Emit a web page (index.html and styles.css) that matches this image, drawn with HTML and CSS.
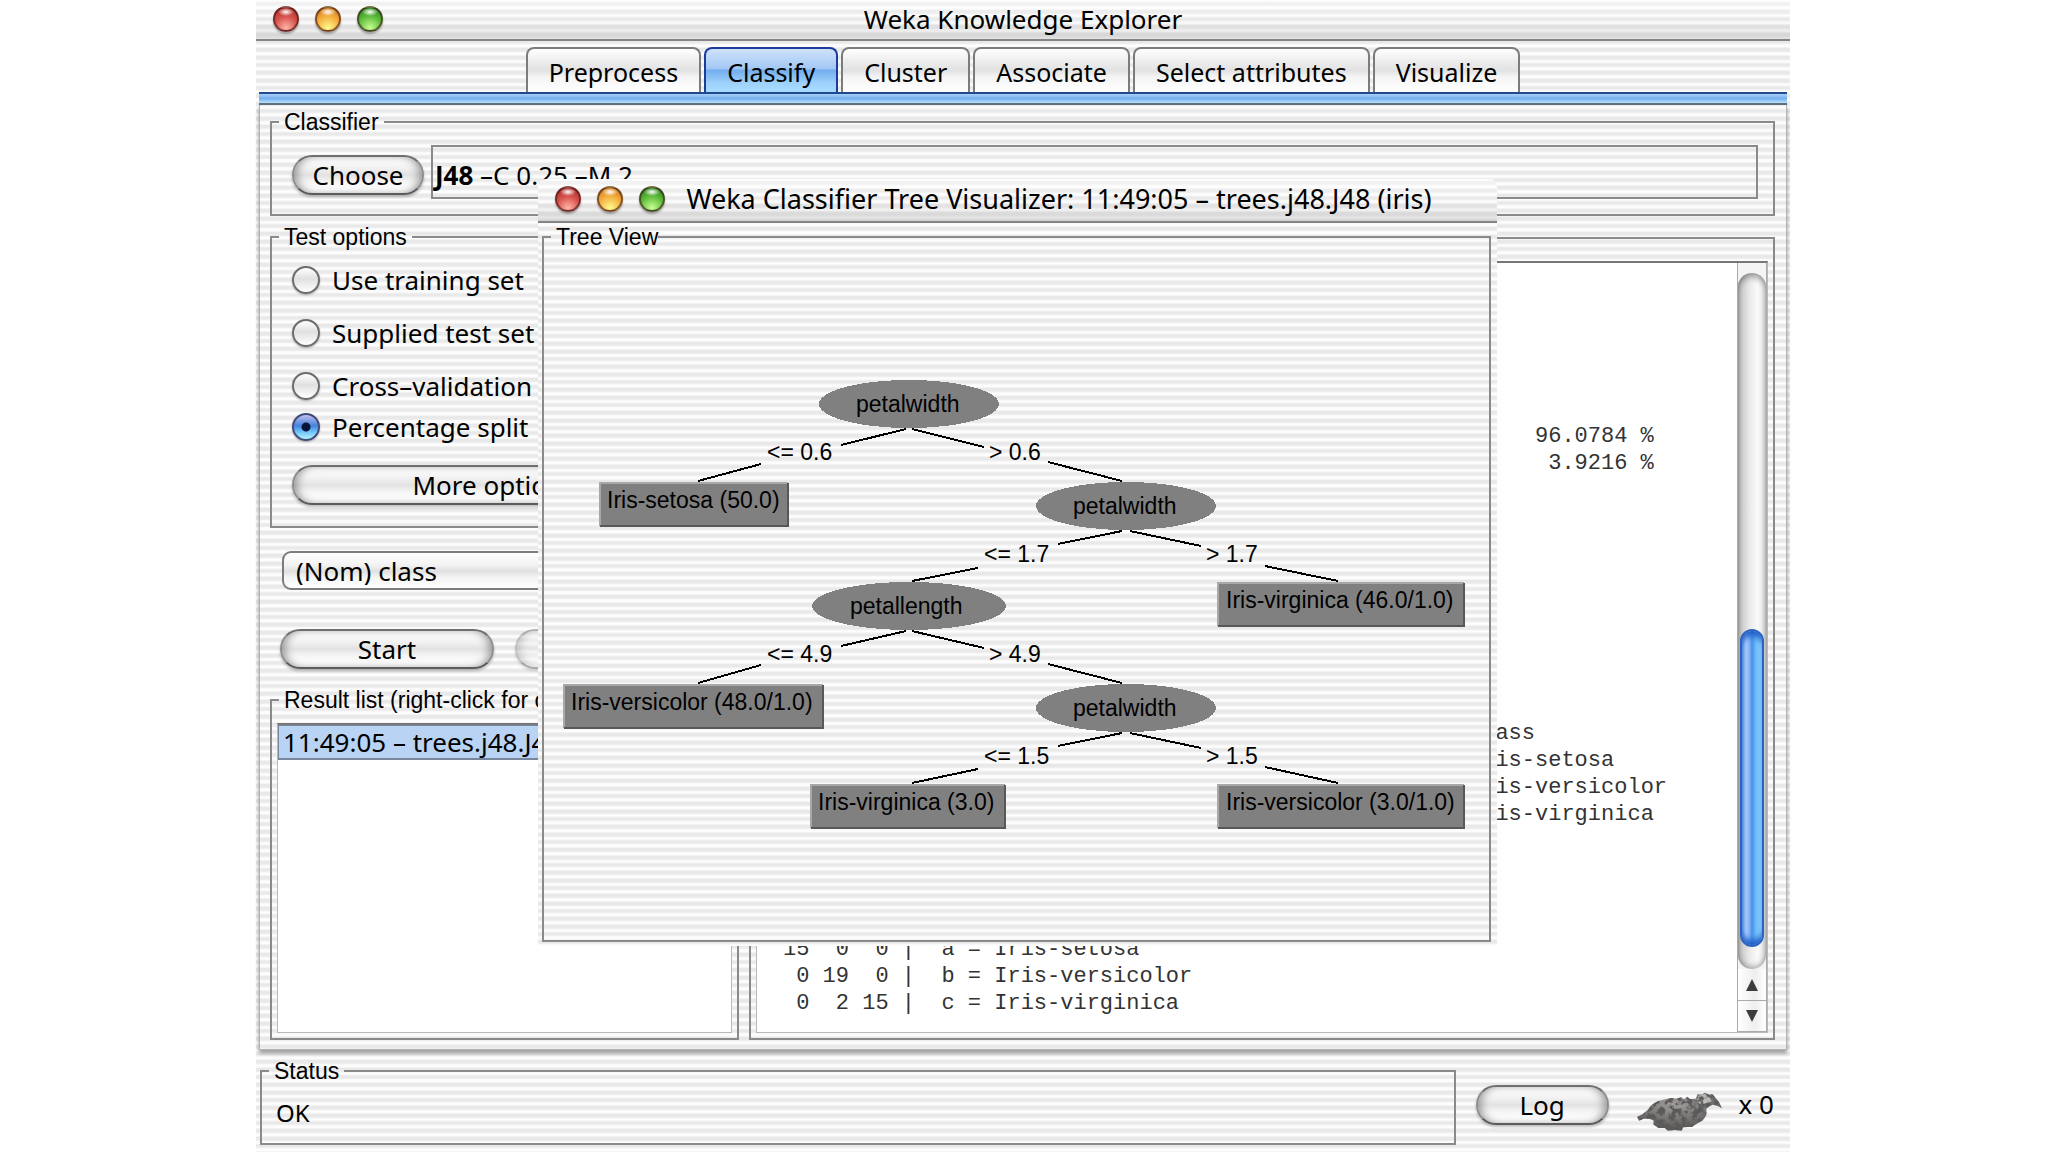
FILE: index.html
```html
<!DOCTYPE html>
<html lang="en">
<head>
<meta charset="utf-8">
<title>Weka Knowledge Explorer</title>
<link rel="stylesheet" href="styles.css">
</head>
<body>
<main class="window">
  <header class="titlebar">
    <div class="lights">
      <button class="light red" aria-label="Close"></button>
      <button class="light amber" aria-label="Minimize"></button>
      <button class="light green" aria-label="Zoom"></button>
    </div>
    <h1 class="title">Weka Knowledge Explorer</h1>
  </header>

  <nav class="tabs">
    <button class="tab">Preprocess</button>
    <button class="tab active">Classify</button>
    <button class="tab">Cluster</button>
    <button class="tab">Associate</button>
    <button class="tab">Select attributes</button>
    <button class="tab">Visualize</button>
  </nav>
  <div class="strip"></div>

  <div class="panel">
    <fieldset class="group">
      <legend>Classifier</legend>
      <div class="classifier-row">
        <button class="aqua choose">Choose</button>
        <div class="scheme"><b>J48</b> –C 0.25 –M 2</div>
      </div>
    </fieldset>

    <div class="columns">
      <div class="side">
        <fieldset class="group">
          <legend>Test options</legend>
          <div class="options">
            <label class="option"><input class="radio" type="radio" name="test">Use training set</label>
            <label class="option"><input class="radio" type="radio" name="test">Supplied test set</label>
            <label class="option"><input class="radio" type="radio" name="test">Cross–validation</label>
            <label class="option last"><input class="radio" type="radio" name="test" checked>Percentage split</label>
            <button class="aqua more">More options...</button>
          </div>
        </fieldset>
        <div class="controls">
          <select class="combo" aria-label="Class attribute"><option>(Nom) class</option></select>
          <div class="run">
            <button class="aqua">Start</button>
            <button class="aqua" disabled>Stop</button>
          </div>
        </div>
        <fieldset class="group results">
          <legend>Result list (right-click for options)</legend>
          <ul class="list">
            <li class="selected">11:49:05 – trees.j48.J48</li>
          </ul>
        </fieldset>
      </div>

      <section class="group output">
        <div class="output-box">
          <div class="log">
<pre class="summary">96.0784 %
 3.9216 %</pre>
<pre class="classes">Class
Iris-setosa
Iris-versicolor
Iris-virginica</pre>
<pre class="matrix">15  0  0 |  a = Iris-setosa
 0 19  0 |  b = Iris-versicolor
 0  2 15 |  c = Iris-virginica</pre>
          </div>
          <div class="scrollbar">
            <div class="track">
              <div class="thumb"></div>
            </div>
            <button class="arrow" aria-label="Scroll up"><svg width="14" height="12" viewBox="0 0 14 12"><path d="M7 0L13 12H1Z" fill="#3c3c3c"/></svg></button>
            <button class="arrow" aria-label="Scroll down"><svg width="14" height="12" viewBox="0 0 14 12"><path d="M7 12L13 0H1Z" fill="#3c3c3c"/></svg></button>
          </div>
        </div>
      </section>
    </div>
  </div>

  <footer class="footer">
    <fieldset class="group status">
      <legend>Status</legend>
      <div class="message">OK</div>
    </fieldset>
    <button class="aqua log-button">Log</button>
    <svg class="bird" width="86" height="40" viewBox="0 0 258 120" aria-label="Weka bird">
      <defs>
        <filter id="plumage" x="0" y="0" width="100%" height="100%">
          <feTurbulence type="fractalNoise" baseFrequency="0.06" numOctaves="3" seed="4" result="n"/>
          <feColorMatrix in="n" type="matrix" values="0 0 0 0 0.1  0 0 0 0 0.1  0 0 0 0 0.1  5 0 0 0 -2.1" result="d"/>
          <feComposite in="d" in2="SourceGraphic" operator="in" result="s"/>
          <feMerge><feMergeNode in="SourceGraphic"/><feMergeNode in="s"/></feMerge>
        </filter>
        <radialGradient id="feather" cx="45%" cy="30%" r="65%">
          <stop offset="0" stop-color="#a5a09e"/><stop offset="1" stop-color="#5b5857"/>
        </radialGradient>
      </defs>
      <g filter="url(#plumage)">
        <path fill="url(#feather)" d="M0 74L18 66L34 52L44 38L62 28L84 22L104 18L118 20L132 16L142 22L150 14L160 22L176 20L182 6L194 8L204 2L216 8L226 6L238 20L248 34L254 48L242 42L228 38L218 42L208 50L208 70L196 86L184 92L166 104L138 106L134 116L112 114L92 116L84 108L64 108L50 98L50 86L38 80L20 80L6 86Z"/>
        <path fill="#bdbab8" d="M184 12L204 6L216 14L224 28L206 34L190 40L180 28Z"/>
      </g>
    </svg>
    <span class="count">x 0</span>
  </footer>

  <section class="dialog" role="dialog" aria-label="Weka Classifier Tree Visualizer">
    <header class="titlebar">
      <div class="lights">
        <button class="light red" aria-label="Close"></button>
        <button class="light amber" aria-label="Minimize"></button>
        <button class="light green" aria-label="Zoom"></button>
      </div>
      <h2 class="title">Weka Classifier Tree Visualizer: 11:49:05 – trees.j48.J48 (iris)</h2>
    </header>
    <fieldset class="group tree">
      <legend>Tree View</legend>
      <svg class="graph" viewBox="544 251 945 689">
        <g class="edges">
          <path d="M906 429L841 445M761 464L698 481M912 429L984 447M1048 462L1122 481"/>
          <path d="M1122 531L1058 544M978 568L912 581M1130 531L1201 546M1265 566L1338 581"/>
          <path d="M906 631L841 646M761 665L698 683M912 631L984 648M1048 664L1122 683"/>
          <path d="M1122 733L1058 746M978 769L912 783M1130 733L1201 748M1265 767L1338 783"/>
        </g>
        <g class="splits">
          <ellipse cx="909" cy="404" rx="90" ry="24"/>
          <ellipse cx="1126" cy="506" rx="90" ry="24"/>
          <ellipse cx="909" cy="606" rx="97" ry="24"/>
          <ellipse cx="1126" cy="708" rx="90" ry="24"/>
        </g>
        <g class="leaves">
          <rect x="600" y="483" width="188" height="43"/>
          <rect x="1218" y="583" width="246" height="43"/>
          <rect x="564" y="685" width="259" height="43"/>
          <rect x="811" y="785" width="194" height="43"/>
          <rect x="1218" y="785" width="246" height="43"/>
        </g>
        <path class="light-edge" d="M600 526V483H788M1218 626V583H1464M564 728V685H823M811 828V785H1005M1218 828V785H1464"/>
        <path class="dark-edge" d="M600 526H788V483M1218 626H1464V583M564 728H823V685M811 828H1005V785M1218 828H1464V785"/>
        <g class="names">
          <text x="856" y="412">petalwidth</text>
          <text x="1073" y="514">petalwidth</text>
          <text x="850" y="614">petallength</text>
          <text x="1073" y="716">petalwidth</text>
          <text x="607" y="508">Iris-setosa (50.0)</text>
          <text x="1226" y="608">Iris-virginica (46.0/1.0)</text>
          <text x="571" y="710">Iris-versicolor (48.0/1.0)</text>
          <text x="818" y="810">Iris-virginica (3.0)</text>
          <text x="1226" y="810">Iris-versicolor (3.0/1.0)</text>
          <text x="767" y="460">&lt;= 0.6</text>
          <text x="989" y="460">&gt; 0.6</text>
          <text x="984" y="562">&lt;= 1.7</text>
          <text x="1206" y="562">&gt; 1.7</text>
          <text x="767" y="662">&lt;= 4.9</text>
          <text x="989" y="662">&gt; 4.9</text>
          <text x="984" y="764">&lt;= 1.5</text>
          <text x="1206" y="764">&gt; 1.5</text>
        </g>
      </svg>
    </fieldset>
  </section>
</main>
</body>
</html>
```
FILE: styles.css
```css
:root {
  --ui: "Noto Sans", "Open Sans", sans-serif;
  --label: "Liberation Sans", Arial, sans-serif;
  --line: #8a8a8a;
  --stripes: repeating-linear-gradient(
    #fdfdfd 0, #fdfdfd 1px, #e9e9e9 2px, #e9e9e9 5px, #f4f4f4 6px,
    #fdfdfd 7px, #fdfdfd 9px, #e9e9e9 10px, #e9e9e9 13px, #f4f4f4 14px,
    #fdfdfd 15px, #fdfdfd 16px, #e9e9e9 18px, #e9e9e9 20px, #f4f4f4 21px,
    #fdfdfd 22px, #fdfdfd 23px);
}

* { box-sizing: border-box; }

body {
  margin: 0;
  padding: 0 258px 0 256px;
  background: #fff;
  color: #000;
  font: 26px/28px var(--ui);
}

button, select, input {
  margin: 0;
  color: inherit;
  font: inherit;
}

.window {
  position: relative;
  display: flex;
  flex-direction: column;
  min-height: 100vh;
  background: var(--stripes);
}

/* Title bars */
.titlebar {
  display: grid;
  grid-template-columns: 126px 1fr 126px;
  align-items: center;
  height: 41px;
  padding: 0 17px 2px;
  border-bottom: 2px solid #858585;
  background: linear-gradient(rgba(255, 255, 255, .5), rgba(255, 255, 255, 0) 50%, rgba(170, 170, 170, .35));
}

.lights { display: flex; gap: 16px; }

.light {
  width: 26px;
  height: 26px;
  padding: 0;
  border: 2px solid rgba(60, 20, 20, .6);
  border-radius: 50%;
  box-shadow: 0 2px 2px rgba(0, 0, 0, .3);
}

.red { background: radial-gradient(ellipse 8px 4px at 50% 18%, #fff, transparent), radial-gradient(circle at 50% 90%, #ffb4a8, #d8534d 50%, #a02420); }
.amber { background: radial-gradient(ellipse 8px 4px at 50% 18%, #fff, transparent), radial-gradient(circle at 50% 90%, #fffa8c, #f3a93a 55%, #c06c12); }
.green { background: radial-gradient(ellipse 8px 4px at 50% 18%, #fff, transparent), radial-gradient(circle at 50% 90%, #c8ff90, #58b838 55%, #23761a); }

.title {
  margin: 0;
  font-size: 26px;
  font-weight: 400;
  line-height: 28px;
  text-align: center;
  white-space: nowrap;
}

/* Tabs */
.tabs {
  display: flex;
  justify-content: center;
  gap: 3px;
  margin: 6px 3px 0;
}

.tab {
  height: 45px;
  padding: 2px 21px 0;
  border: 2px solid #7c7c7c;
  border-bottom: 0;
  border-radius: 8px 8px 0 0;
  background: linear-gradient(#fff, #ececec 30%, #e2e2e2 50%, #f4f4f4 65%, #fff);
  font-size: 25px;
}

.tab.active {
  border-color: #1b3c9c;
  background: linear-gradient(#cfe2fa, #a3c8f5 45%, #73aeee 50%, #9fd2fb 80%, #a8dcff);
}

.strip {
  height: 13px;
  margin: 0 3px;
  border-top: 2px solid #1f4a8c;
  border-bottom: 2px solid #5f6f7c;
  background: linear-gradient(#a9d0fa, #76b0ee 50%, #b4e2ff);
}

/* Main panel */
.panel {
  display: flex;
  flex: 1;
  flex-direction: column;
  gap: 7px;
  margin: 0 3px;
  padding: 3px 11px 9px 10px;
  border: 1px solid #b4b4b4;
  border-top: 0;
  box-shadow: 0 3px 4px rgba(0, 0, 0, .4);
}

.group {
  min-width: 0;
  margin: 0;
  padding: 0;
  border: 2px solid var(--line);
}

.group legend {
  height: 28px;
  margin-left: 7px;
  padding: 0 5px;
  font: 23px/28px var(--label);
  white-space: nowrap;
}

.classifier-row {
  display: flex;
  align-items: center;
  gap: 7px;
  padding: 9px 15px 15px 20px;
}

.scheme {
  flex: 1;
  height: 54px;
  padding: 14px 2px 0;
  border: 2px solid var(--line);
}

.aqua {
  height: 40px;
  padding: 0;
  border: 2px solid #6f6f6f;
  border-color: #6f6f6f #8d8d8d #5c5c5c;
  border-radius: 20px;
  background: linear-gradient(#fff, #f2f2f2 30%, #e2e2e2 50%, #f6f6f6 70%, #fff);
  box-shadow: inset 6px 0 8px -3px rgba(0, 0, 0, .35), inset -6px 0 8px -3px rgba(0, 0, 0, .35), 0 2px 3px rgba(0, 0, 0, .25);
}

.aqua:disabled { opacity: .5; }

.choose { width: 132px; margin-top: 5px; }

.columns {
  display: grid;
  flex: 1;
  grid-template-columns: 469px 1fr;
  gap: 10px;
}

.side { display: flex; flex-direction: column; }

.options {
  display: flex;
  flex-direction: column;
  padding: 2px 20px 21px;
}

.option {
  display: flex;
  align-items: center;
  gap: 12px;
  height: 53px;
}

.option.last { height: 30px; }

.radio {
  appearance: none;
  width: 28px;
  height: 28px;
  border: 2px solid #6c6c6c;
  border-radius: 50%;
  background: linear-gradient(#fff, #e0e0e0 45%, #fff);
  box-shadow: 0 1px 2px rgba(0, 0, 0, .3);
}

.radio:checked {
  border-color: #3f4c78;
  background: radial-gradient(circle, #071338 4px, transparent 5px), linear-gradient(#c3bdf0, #4383dc 45%, #6fc3f8 70%, #b5f4ff);
}

.more { width: 100%; margin-top: 23px; }

.controls {
  display: flex;
  flex-direction: column;
  gap: 39px;
  padding: 23px 10px 17px;
}

.combo {
  appearance: none;
  height: 39px;
  margin: 0 2px;
  padding: 0 12px;
  border: 2px solid #7c7c7c;
  border-radius: 9px;
  background: linear-gradient(#fff, #f2f2f2 35%, #e0e0e0 52%, #f4f4f4 70%, #fff);
}

.run {
  display: grid;
  grid-template-columns: 1fr 1fr;
  gap: 21px;
}

.results {
  display: flex;
  flex: 1;
  flex-direction: column;
}

.list {
  flex: 1;
  margin: 9px 5px 5px;
  padding: 0;
  border: 1px solid #b9b9b9;
  border-top: 2px solid #777;
  background: #fff;
  list-style: none;
}

.selected {
  padding: 2px 4px;
  border: 1px solid #77869c;
  border-bottom-width: 2px;
  background: #b9d3f5;
}

.output {
  display: flex;
  margin-top: 14px;
  padding: 22px 5px 5px;
}

.output-box {
  display: flex;
  flex: 1;
  justify-content: space-between;
  border: 1px solid #b9b9b9;
  border-top: 2px solid #777;
  background: #fff;
}

.log {
  padding: 160px 0 0 26px;
  color: #333;
}

.log pre {
  margin: 0;
  font: 22px/27px "Liberation Mono", "Courier New", monospace;
}

.summary { padding-left: 752px; }
.log .classes { padding: 243px 0 108px 686px; }
.log .summary { padding-left: 752px; }

.scrollbar {
  display: flex;
  flex-direction: column;
  width: 30px;
  border: 1px solid #aaa;
  border-width: 0 1px 1px;
  background: #f4f4f4;
}

.track {
  display: flex;
  flex: 1;
  flex-direction: column;
  margin-top: 10px;
  padding: 0 2px;
  border-radius: 14px;
  background: linear-gradient(90deg, #bcbcbc, #e9e9e9 40%, #fafafa 70%, #dedede);
  box-shadow: inset 0 6px 6px -2px rgba(0, 0, 0, .35), inset 0 -3px 5px rgba(0, 0, 0, .25);
}

.track::before { content: ""; flex: 359; }
.track::after { content: ""; flex: 22; }

.thumb {
  flex: 317;
  border: 2px solid #2d62c0;
  border-radius: 12px;
  background: linear-gradient(90deg, #5e98ec, #aacbf8 20%, #89b8f6 35%, #4a90ec 50%, #6ebcfb 70%, #93dcff);
  box-shadow: inset 0 8px 6px -3px #1f5fc8, inset 0 -8px 6px -3px #1f5fc8;
}

.arrow {
  display: flex;
  align-items: center;
  justify-content: center;
  height: 31px;
  padding: 0;
  border: 0;
  background: linear-gradient(90deg, #fff, #eee 60%, #fff);
}

.arrow + .arrow { border-top: 1px solid #aaa; }

/* Status strip */
.footer {
  display: flex;
  align-items: center;
  padding: 7px 16px 7px 4px;
}

.status {
  flex: 1;
  height: 88px;
}

.message { padding: 14px 14px 0; font-size: 24px; }

.log-button { width: 133px; margin: 8px 28px 0 20px; }

.bird { margin-top: 22px; }

.count { margin: 6px 0 0 16px; }

/* Tree visualizer window */
.dialog {
  position: absolute;
  top: 179px;
  left: 282px;
  width: 959px;
  padding-bottom: 4px;
  border-radius: 8px 8px 0 0;
  background: var(--stripes);
}

.dialog .titlebar {
  grid-template-columns: 126px 1fr 43px;
  height: 44px;
  border-radius: 8px 8px 0 0;
}

.dialog .title { font-size: 27px; }

.tree { margin: 0 6px 0 4px; }

.tree legend { padding: 0 0 0 5px; }

.graph { display: block; width: 100%; }

.edges { stroke: #000; stroke-width: 2px; shape-rendering: crispEdges; fill: none; }
.splits, .leaves { fill: #808080; shape-rendering: crispEdges; }
.light-edge, .dark-edge { fill: none; stroke-width: 2px; }
.light-edge { stroke: #a8a8a8; }
.dark-edge { stroke: #585858; }
.names { font: 23px var(--label); }
```
